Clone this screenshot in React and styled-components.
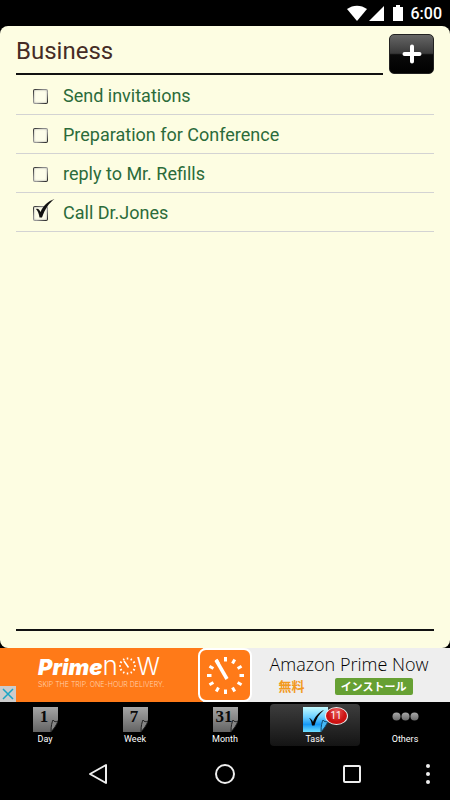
import React, { useState } from 'react';
import styled, { createGlobalStyle } from 'styled-components';

const GlobalStyle = createGlobalStyle`
  * {
    box-sizing: border-box;
  }

  body {
    margin: 0;
    background: #000;
    font-family: Roboto, 'Liberation Sans', sans-serif;
  }

  button {
    margin: 0;
    padding: 0;
    border: none;
    background: none;
    color: inherit;
    font-family: inherit;
    cursor: pointer;
  }

  svg {
    display: block;
  }
`;

const Screen = styled.div`
  display: flex;
  flex-direction: column;
  min-height: 100vh;
  background: #000;
`;

const StatusBar = styled.header`
  display: flex;
  align-items: center;
  justify-content: flex-end;
  height: 26px;
  padding: 2px 8px 0 0;
  color: #fff;

  span {
    margin-left: 5px;
    font-size: 16px;
    font-weight: 500;
    line-height: 24px;
  }
`;

const Sheet = styled.main`
  flex: 1;
  display: flex;
  flex-direction: column;
  padding: 8px 16px 17px;
  border-radius: 8px;
  background: #fdfde2;
`;

const SheetHeader = styled.div`
  display: flex;
  align-items: flex-start;
  gap: 6px;
`;

const Title = styled.h1`
  flex: 1;
  height: 41px;
  margin: 0 0 1px;
  border-bottom: 2px solid #111;
  color: #452c26;
  font-size: 24px;
  font-weight: 400;
  line-height: 34px;
`;

const AddButton = styled.button`
  display: flex;
  align-items: center;
  justify-content: center;
  width: 45px;
  height: 40px;
  border: 1px solid #222;
  border-radius: 5px;
  background: linear-gradient(#666 0%, #3a3a3a 48%, #0a0a0a 52%, #000 100%);
`;

const TaskList = styled.ul`
  flex: 1;
  margin: 0;
  padding: 0;
  list-style: none;
`;

const TaskRow = styled.li`
  height: 39px;
  border-bottom: 1px solid #d3d3d3;
`;

const TaskLabel = styled.label`
  display: flex;
  align-items: center;
  gap: 15px;
  height: 38px;
  padding: 2px 0 0 17px;
  color: #2b6b3a;
  font-size: 18px;
  line-height: 36px;
`;

const CheckWrap = styled.span`
  position: relative;
  width: 15px;
  height: 15px;

  input {
    display: block;
    appearance: none;
    width: 15px;
    height: 15px;
    margin: 0;
    border: 1px solid transparent;
    border-radius: 2px;
    background:
      linear-gradient(#fdfdea, #fdfdea) padding-box,
      linear-gradient(135deg, #222 0%, #888 35%, #999 60%, #111 100%) border-box;
    box-shadow: inset 0 0 2px #999;
  }

  svg {
    position: absolute;
    left: 2px;
    bottom: 2px;
    pointer-events: none;
  }
`;

const BottomRule = styled.hr`
  width: 100%;
  height: 2px;
  margin: 0;
  border: none;
  background: #111;
`;

const Ad = styled.aside`
  position: relative;
  display: flex;
  height: 54px;
  background: #eee;
`;

const AdBrand = styled.div`
  flex: 0 0 45%;
  padding: 6px 0 0 38px;
  background: #ff7a18;
  color: #fff;
`;

const BrandName = styled.div`
  display: flex;
  align-items: baseline;
  height: 26px;
  font-family: Inter, sans-serif;
  line-height: 24px;
  white-space: nowrap;

  b {
    font-size: 22px;
    font-style: italic;
    font-weight: 900;
  }
`;

const BrandLetter = styled.span`
  font-size: ${({ $size }) => $size}px;
  font-weight: 300;
`;

const BrandTagline = styled.div`
  color: #ffd0ad;
  font-family: Inter, sans-serif;
  font-size: 7px;
  font-weight: 300;
  line-height: 10px;
  white-space: nowrap;
`;

const AdIcon = styled.div`
  flex: none;
  width: 54px;
  height: 54px;
  margin-left: -5px;
  border: 2px solid #fff;
  border-radius: 8px;
  background: #ff7a18;
`;

const AdText = styled.div`
  flex: 1;
  padding: 3px 0 0 18px;
  color: #000;
  font-family: 'Open Sans', sans-serif;
  font-size: 18px;
  font-weight: 300;
  line-height: 26px;
  white-space: nowrap;
`;

const AdOffer = styled.div`
  display: flex;
  align-items: center;
  gap: 30px;
  height: 18px;
  padding-left: 9px;
  color: #f29a1f;
  font-family: 'Noto Sans CJK JP', sans-serif;
  font-size: 13px;
  font-weight: 700;
  line-height: 18px;
`;

const InstallButton = styled.button`
  width: 78px;
  height: 17px;
  border-radius: 2px;
  background: #66a033;
  color: #fff;
  font-family: 'Noto Sans CJK JP', sans-serif;
  font-size: 11px;
  font-weight: 700;
  line-height: 16px;
`;

const AdClose = styled.button`
  position: absolute;
  left: 0;
  bottom: 0;
  width: 16px;
  height: 16px;
  background: #ccc;
`;

const TabBar = styled.nav`
  display: grid;
  grid-template-columns: repeat(5, 1fr);
  padding: 2px 0;
`;

const Tab = styled.button`
  display: flex;
  flex-direction: column;
  align-items: center;
  height: 42px;
  padding-top: 3px;
  border-radius: 4px;
  background: ${({ $active }) => ($active ? 'linear-gradient(#3d3d3d, #141414)' : 'none')};
  color: #fff;
  font-size: 9px;
  line-height: 14px;
`;

const TabIcon = styled.span`
  position: relative;
  display: flex;
  justify-content: center;
  width: 25px;
  height: 25px;

  svg {
    flex: none;
  }
`;

const Badge = styled.span`
  position: absolute;
  top: 0;
  left: 22px;
  width: 23px;
  height: 18px;
  border: 1px solid #eee;
  border-radius: 50%;
  background: radial-gradient(at 50% 20%, #e85a5a, #cc1111 60%);
  font-size: 10px;
  line-height: 15px;
  text-align: center;
`;

const NavBar = styled.footer`
  display: grid;
  grid-template-columns: 35px 1fr 1fr 1fr 35px;
  height: 52px;
`;

const NavButton = styled.button`
  display: flex;
  align-items: center;
  justify-content: center;

  &:first-child {
    grid-column: 2;
  }

  &:last-child {
    justify-content: flex-start;
  }
`;

const tasks = [
  { id: 1, title: 'Send invitations', done: false },
  { id: 2, title: 'Preparation for Conference', done: false },
  { id: 3, title: 'reply to Mr. Refills', done: false },
  { id: 4, title: 'Call Dr.Jones', done: true },
];

const ticks = [0, 30, 60, 90, 120, 150, 180, 210, 240, 270, 300, 330];

function StatusIcons() {
  return (
    <svg width="59" height="18" viewBox="0 0 59 18" fill="#fff">
      <path d="M0 4C6-.5 14-.5 20 4L10 16z" />
      <path d="M37 1v15H22z" />
      <path d="M49 0h4v2h3v14H46V2h3z" />
    </svg>
  );
}

function PageIcon({ text }) {
  return (
    <svg width="25" height="25" viewBox="0 0 25 25">
      <defs>
        <linearGradient id={`page${text}`} x1="0" y1="0" x2="0" y2="1">
          <stop offset="0" stopColor="#a6a6a6" />
          <stop offset="1" stopColor="#636363" />
        </linearGradient>
      </defs>
      <path d="M0 0H25V14L18 25H0z" fill={`url(#page${text})`} />
      <path d="M18 24.500C18 19 19 15 20 13C21 15 23 15 25 14C23.500 18 21 22 18 24.500z" fill="#858585" stroke="#222" strokeWidth="1" />
      <text
        x="11"
        y="15"
        textAnchor="middle"
        fontFamily="'Liberation Serif', serif"
        fontWeight="700"
        fontSize="17"
        fill="#0a0a0a"
      >
        {text}
      </text>
    </svg>
  );
}

function TaskIcon() {
  return (
    <svg width="25" height="25" viewBox="0 0 25 25">
      <defs>
        <linearGradient id="taskPage" x1="0" y1="0" x2="0" y2="1">
          <stop offset="0" stopColor="#c4fbff" />
          <stop offset="0.400" stopColor="#6cd0ff" />
          <stop offset="0.700" stopColor="#1698f5" />
          <stop offset="1" stopColor="#6fe0ff" />
        </linearGradient>
      </defs>
      <path d="M0 0H25V15L18 25H0z" fill="url(#taskPage)" />
      <path d="M18 24.500C18 19 19 15 20 13C21 15 23 15 25 14C23.500 18 21 22 18 24.500z" fill="#46b9f5" stroke="#134a6e" />
      <path d="M6 11C8 11.500 9 13 10 15C12 9.500 16 5 21 3C16 7 13 12 11.500 18.500H9C8.500 15 8 13 6 11z" fill="#050505" />
    </svg>
  );
}

function OthersIcon() {
  return (
    <svg width="27" height="25" viewBox="0 0 27 25">
      <defs>
        <linearGradient id="othersDot" x1="0" y1="0" x2="0" y2="1">
          <stop offset="0" stopColor="#aaa" />
          <stop offset="1" stopColor="#686868" />
        </linearGradient>
      </defs>
      {[4.5, 13.5, 22.5].map((cx) => (
        <circle key={cx} cx={cx} cy="9.500" r="4" fill="url(#othersDot)" />
      ))}
    </svg>
  );
}

function BrandClock() {
  return (
    <svg width="19" height="18" viewBox="0 0 19 18" stroke="#fff">
      {ticks.map((deg) => (
        <path key={deg} d="M9.500 0.500V2.500" strokeWidth="1.500" transform={`rotate(${deg} 9.500 9)`} />
      ))}
      <path d="M6 4L10.500 10.500" strokeWidth="1.500" />
    </svg>
  );
}

function AdClock() {
  return (
    <svg width="50" height="50" viewBox="0 0 50 50" stroke="#fff">
      {ticks.map((deg) => (
        <path key={deg} d="M25.500 7V11.500" strokeWidth="3" transform={`rotate(${deg} 25.500 25.500)`} />
      ))}
      <path d="M16 10L27 29" strokeWidth="3.500" />
    </svg>
  );
}

function TaskItem({ task }) {
  const [done, setDone] = useState(task.done);

  return (
    <TaskRow>
      <TaskLabel>
        <CheckWrap>
          <input type="checkbox" checked={done} onChange={() => setDone(!done)} />
          {done && (
            <svg width="20" height="20" viewBox="0 0 20 20">
              <path d="M1 10C3 9 4.500 10.500 5.500 13C8 7 13 2 19.500 0C14 4 10 10 7 18.500H4.500C4 15 3 12 1 10z" fill="#111" />
            </svg>
          )}
        </CheckWrap>
        {task.title}
      </TaskLabel>
    </TaskRow>
  );
}

function App() {
  const [tab, setTab] = useState('Task');

  const tabs = [
    { name: 'Day', icon: <PageIcon text="1" /> },
    { name: 'Week', icon: <PageIcon text="7" /> },
    { name: 'Month', icon: <PageIcon text="31" /> },
    { name: 'Task', icon: <TaskIcon />, count: 11 },
    { name: 'Others', icon: <OthersIcon /> },
  ];

  return (
    <Screen>
      <GlobalStyle />
      <StatusBar>
        <StatusIcons />
        <span>6:00</span>
      </StatusBar>

      <Sheet>
        <SheetHeader>
          <Title>Business</Title>
          <AddButton aria-label="Add task">
            <svg width="20" height="20" viewBox="0 0 20 20" stroke="#fff" strokeWidth="4" strokeLinecap="round">
              <path d="M10 2.500V17.500M2.500 10H17.500" />
            </svg>
          </AddButton>
        </SheetHeader>
        <TaskList>
          {tasks.map((task) => (
            <TaskItem key={task.id} task={task} />
          ))}
        </TaskList>
        <BottomRule />
      </Sheet>

      <Ad>
        <AdBrand>
          <BrandName>
            <b>Prime</b>
            <BrandLetter $size={26}>n</BrandLetter>
            <BrandClock />
            <BrandLetter $size={24}>W</BrandLetter>
          </BrandName>
          <BrandTagline>SKIP THE TRIP. ONE-HOUR DELIVERY.</BrandTagline>
        </AdBrand>
        <AdIcon>
          <AdClock />
        </AdIcon>
        <AdText>
          Amazon Prime Now
          <AdOffer>
            無料
            <InstallButton>インストール</InstallButton>
          </AdOffer>
        </AdText>
        <AdClose aria-label="Close ad">
          <svg width="16" height="16" viewBox="0 0 16 16" stroke="#1ba5c4" strokeWidth="1.500">
            <path d="M3 3L13 13M13 3L3 13" />
          </svg>
        </AdClose>
      </Ad>

      <TabBar>
        {tabs.map(({ name, icon, count }) => (
          <Tab key={name} $active={tab === name} onClick={() => setTab(name)}>
            <TabIcon>
              {icon}
              {count && <Badge>{count}</Badge>}
            </TabIcon>
            {name}
          </Tab>
        ))}
      </TabBar>

      <NavBar>
        <NavButton aria-label="Back">
          <svg width="20" height="22" viewBox="0 0 20 22" fill="none" stroke="#eee" strokeWidth="2" strokeLinejoin="round">
            <path d="M18 2V20L2 11z" />
          </svg>
        </NavButton>
        <NavButton aria-label="Home">
          <svg width="22" height="22" viewBox="0 0 22 22" fill="none" stroke="#eee" strokeWidth="2">
            <circle cx="11" cy="11" r="9" />
          </svg>
        </NavButton>
        <NavButton aria-label="Recent apps">
          <svg width="20" height="20" viewBox="0 0 20 20" fill="none" stroke="#eee" strokeWidth="2">
            <rect x="2" y="2" width="16" height="16" rx="1" />
          </svg>
        </NavButton>
        <NavButton aria-label="More options">
          <svg width="26" height="22" viewBox="0 0 26 22" fill="#eee">
            <circle cx="13" cy="3" r="2" />
            <circle cx="13" cy="11" r="2" />
            <circle cx="13" cy="19" r="2" />
          </svg>
        </NavButton>
      </NavBar>
    </Screen>
  );
}

export default App;
